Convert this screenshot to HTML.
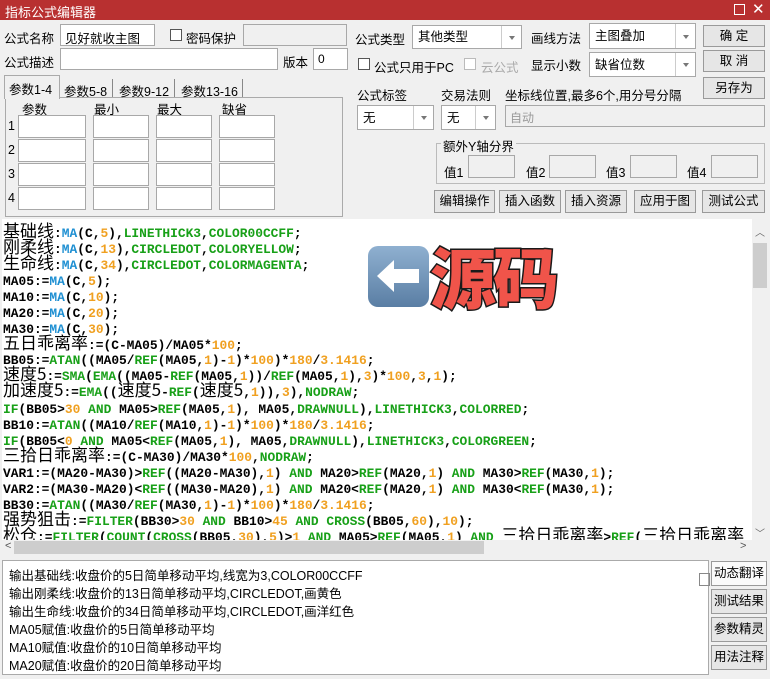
<!DOCTYPE html>
<html><head><meta charset="utf-8"><style>
*{margin:0;padding:0;box-sizing:border-box}
body{width:770px;height:679px;overflow:hidden;background:#f0f0f0;font-family:"Liberation Sans","Noto Sans CJK SC",sans-serif;font-size:12px;color:#000;position:relative}
.a{position:absolute}
.inp{position:absolute;background:#fff;border:1px solid #a8a8a8}
.btn{position:absolute;background:#e6e6e6;border:1px solid #9a9a9a;text-align:center;font-size:12.5px;line-height:20px}
.lbl{position:absolute;font-size:12.5px;white-space:nowrap}
.cb{position:absolute;width:12px;height:12px;border:1px solid #555;background:#fff}
.dd{position:absolute;background:#fff;border:1px solid #a8a8a8;font-size:12.5px;padding-left:5px}
.dd i{position:absolute;right:0;top:0;bottom:0;width:20px;border-left:1px solid #ccc;}
.dd i:after{content:"";position:absolute;left:7px;top:45%;border:3px solid transparent;border-top:4px solid #777}
#code{position:absolute;left:2px;top:219px;width:750px;height:321px;background:#fff;overflow:hidden}
#code div{position:absolute;left:1px;white-space:pre;font-family:"Liberation Mono",monospace;font-weight:bold;font-size:12.9px;line-height:16px;height:16px;letter-spacing:0}
.z{font-family:"Noto Sans CJK SC",sans-serif;font-weight:normal;font-size:17px;line-height:0;letter-spacing:0}
.f{color:#1e8fd2}.n{color:#f0a020}.k{color:#18a018}
#out div{position:absolute;left:6px;font-size:12.5px;white-space:nowrap}
</style></head><body>
<div class="a" style="left:0;top:0;width:770px;height:20px;background:#b83030"></div>
<div class="lbl" style="left:5px;top:2px;color:#fff;font-size:13px">指标公式编辑器</div>
<div class="a" style="left:734px;top:4px;width:11px;height:11px;border:1px solid #fff"></div>
<div class="lbl" style="left:752px;top:0px;color:#fff;font-size:15px">✕</div>

<div class="lbl" style="left:4px;top:28px">公式名称</div>
<div class="inp" style="left:60px;top:24px;width:95px;height:22px"><span style="position:absolute;left:4px;top:3px;font-size:12.5px">见好就收主图</span></div>
<div class="cb" style="left:170px;top:29px"></div>
<div class="lbl" style="left:186px;top:28px">密码保护</div>
<div class="inp" style="left:243px;top:24px;width:104px;height:22px;background:#f0f0f0"></div>
<div class="lbl" style="left:4px;top:52px">公式描述</div>
<div class="inp" style="left:60px;top:48px;width:218px;height:22px"></div>
<div class="lbl" style="left:283px;top:52px">版本</div>
<div class="inp" style="left:313px;top:48px;width:35px;height:22px"><span style="position:absolute;left:4px;top:3px">0</span></div>

<div class="a" style="left:5px;top:97px;width:338px;height:120px;border:1px solid #aaa;background:#f0f0f0"></div>
<div class="a" style="left:4px;top:75px;width:56px;height:24px;background:#f0f0f0;border:1px solid #aaa;border-bottom:none"></div>
<div class="lbl" style="left:9px;top:79px">参数1-4</div>
<div class="lbl" style="left:64px;top:81px">参数5-8</div>
<div class="a" style="left:112px;top:79px;width:1px;height:18px;background:#888"></div>
<div class="lbl" style="left:119px;top:81px">参数9-12</div>
<div class="a" style="left:174px;top:79px;width:1px;height:18px;background:#888"></div>
<div class="lbl" style="left:181px;top:81px">参数13-16</div>
<div class="a" style="left:242px;top:79px;width:1px;height:18px;background:#888"></div>
<div class="lbl" style="left:22px;top:99px">参数</div>
<div class="lbl" style="left:94px;top:99px">最小</div>
<div class="lbl" style="left:157px;top:99px">最大</div>
<div class="lbl" style="left:222px;top:99px">缺省</div>
<div class="lbl" style="left:8px;top:119px">1</div><div class="lbl" style="left:8px;top:143px">2</div><div class="lbl" style="left:8px;top:167px">3</div><div class="lbl" style="left:8px;top:191px">4</div>
<div class="inp" style="left:18px;top:115px;width:68px;height:23px"></div><div class="inp" style="left:93px;top:115px;width:56px;height:23px"></div><div class="inp" style="left:156px;top:115px;width:56px;height:23px"></div><div class="inp" style="left:219px;top:115px;width:56px;height:23px"></div>
<div class="inp" style="left:18px;top:139px;width:68px;height:23px"></div><div class="inp" style="left:93px;top:139px;width:56px;height:23px"></div><div class="inp" style="left:156px;top:139px;width:56px;height:23px"></div><div class="inp" style="left:219px;top:139px;width:56px;height:23px"></div>
<div class="inp" style="left:18px;top:163px;width:68px;height:23px"></div><div class="inp" style="left:93px;top:163px;width:56px;height:23px"></div><div class="inp" style="left:156px;top:163px;width:56px;height:23px"></div><div class="inp" style="left:219px;top:163px;width:56px;height:23px"></div>
<div class="inp" style="left:18px;top:187px;width:68px;height:23px"></div><div class="inp" style="left:93px;top:187px;width:56px;height:23px"></div><div class="inp" style="left:156px;top:187px;width:56px;height:23px"></div><div class="inp" style="left:219px;top:187px;width:56px;height:23px"></div>

<div class="lbl" style="left:355px;top:29px">公式类型</div>
<div class="dd" style="left:412px;top:25px;width:110px;height:24px;line-height:22px">其他类型<i></i></div>
<div class="lbl" style="left:531px;top:28px">画线方法</div>
<div class="dd" style="left:589px;top:23px;width:107px;height:26px;line-height:24px">主图叠加<i></i></div>
<div class="cb" style="left:358px;top:58px"></div>
<div class="lbl" style="left:374px;top:57px">公式只用于PC</div>
<div class="cb" style="left:464px;top:58px;border-color:#bbb"></div>
<div class="lbl" style="left:481px;top:57px;color:#aaa">云公式</div>
<div class="lbl" style="left:531px;top:55px">显示小数</div>
<div class="dd" style="left:589px;top:52px;width:107px;height:25px;line-height:24px">缺省位数<i></i></div>
<div class="btn" style="left:703px;top:25px;width:62px;height:22px">确 定</div>
<div class="btn" style="left:703px;top:50px;width:62px;height:22px">取 消</div>
<div class="btn" style="left:703px;top:77px;width:62px;height:22px">另存为</div>
<div class="lbl" style="left:357px;top:85px">公式标签</div>
<div class="dd" style="left:357px;top:105px;width:77px;height:25px;line-height:24px">无<i></i></div>
<div class="lbl" style="left:441px;top:85px">交易法则</div>
<div class="dd" style="left:441px;top:105px;width:55px;height:25px;line-height:24px">无<i></i></div>
<div class="lbl" style="left:505px;top:85px">坐标线位置,最多6个,用分号分隔</div>
<div class="inp" style="left:505px;top:105px;width:260px;height:22px;background:#f0f0f0"><span style="position:absolute;left:4px;top:3px;color:#999">自动</span></div>
<div class="a" style="left:436px;top:143px;width:329px;height:41px;border:1px solid #bbb"></div>
<div class="lbl" style="left:441px;top:136px;background:#f0f0f0;padding:0 2px">额外Y轴分界</div>
<div class="lbl" style="left:444px;top:162px">值1</div><div class="inp" style="left:468px;top:155px;width:47px;height:23px;background:#f0f0f0"></div>
<div class="lbl" style="left:526px;top:162px">值2</div><div class="inp" style="left:549px;top:155px;width:47px;height:23px;background:#f0f0f0"></div>
<div class="lbl" style="left:606px;top:162px">值3</div><div class="inp" style="left:630px;top:155px;width:47px;height:23px;background:#f0f0f0"></div>
<div class="lbl" style="left:687px;top:162px">值4</div><div class="inp" style="left:711px;top:155px;width:47px;height:23px;background:#f0f0f0"></div>
<div class="btn" style="left:434px;top:190px;width:61px;height:23px">编辑操作</div>
<div class="btn" style="left:499px;top:190px;width:62px;height:23px">插入函数</div>
<div class="btn" style="left:565px;top:190px;width:62px;height:23px">插入资源</div>
<div class="btn" style="left:634px;top:190px;width:62px;height:23px">应用于图</div>
<div class="btn" style="left:702px;top:190px;width:63px;height:23px">测试公式</div>

<div id="code">
<div style="top:7px"><span class="z">基础线</span>:<span class="f">MA</span>(C,<span class="n">5</span>),<span class="k">LINETHICK3</span>,<span class="k">COLOR00CCFF</span>;</div>
<div style="top:23px"><span class="z">刚柔线</span>:<span class="f">MA</span>(C,<span class="n">13</span>),<span class="k">CIRCLEDOT</span>,<span class="k">COLORYELLOW</span>;</div>
<div style="top:39px"><span class="z">生命线</span>:<span class="f">MA</span>(C,<span class="n">34</span>),<span class="k">CIRCLEDOT</span>,<span class="k">COLORMAGENTA</span>;</div>
<div style="top:55px">MA05:=<span class="f">MA</span>(C,<span class="n">5</span>);</div>
<div style="top:71px">MA10:=<span class="f">MA</span>(C,<span class="n">10</span>);</div>
<div style="top:87px">MA20:=<span class="f">MA</span>(C,<span class="n">20</span>);</div>
<div style="top:103px">MA30:=<span class="f">MA</span>(C,<span class="n">30</span>);</div>
<div style="top:119px"><span class="z">五日乖离率</span>:=(C-MA05)/MA05*<span class="n">100</span>;</div>
<div style="top:134px">BB05:=<span class="k">ATAN</span>((MA05/<span class="k">REF</span>(MA05,<span class="n">1</span>)-<span class="n">1</span>)*<span class="n">100</span>)*<span class="n">180</span>/<span class="n">3.1416</span>;</div>
<div style="top:150px"><span class="z">速度5</span>:=<span class="k">SMA</span>(<span class="k">EMA</span>((MA05-<span class="k">REF</span>(MA05,<span class="n">1</span>))/<span class="k">REF</span>(MA05,<span class="n">1</span>),<span class="n">3</span>)*<span class="n">100</span>,<span class="n">3</span>,<span class="n">1</span>);</div>
<div style="top:166px"><span class="z">加速度5</span>:=<span class="k">EMA</span>((<span class="z">速度5</span>-<span class="k">REF</span>(<span class="z">速度5</span>,<span class="n">1</span>)),<span class="n">3</span>),<span class="k">NODRAW</span>;</div>
<div style="top:183px"><span class="k">IF</span>(BB05&gt;<span class="n">30</span> <span class="k">AND</span> MA05&gt;<span class="k">REF</span>(MA05,<span class="n">1</span>), MA05,<span class="k">DRAWNULL</span>),<span class="k">LINETHICK3</span>,<span class="k">COLORRED</span>;</div>
<div style="top:199px">BB10:=<span class="k">ATAN</span>((MA10/<span class="k">REF</span>(MA10,<span class="n">1</span>)-<span class="n">1</span>)*<span class="n">100</span>)*<span class="n">180</span>/<span class="n">3.1416</span>;</div>
<div style="top:215px"><span class="k">IF</span>(BB05&lt;<span class="n">0</span> <span class="k">AND</span> MA05&lt;<span class="k">REF</span>(MA05,<span class="n">1</span>), MA05,<span class="k">DRAWNULL</span>),<span class="k">LINETHICK3</span>,<span class="k">COLORGREEN</span>;</div>
<div style="top:231px"><span class="z">三拾日乖离率</span>:=(C-MA30)/MA30*<span class="n">100</span>,<span class="k">NODRAW</span>;</div>
<div style="top:247px">VAR1:=(MA20-MA30)&gt;<span class="k">REF</span>((MA20-MA30),<span class="n">1</span>) <span class="k">AND</span> MA20&gt;<span class="k">REF</span>(MA20,<span class="n">1</span>) <span class="k">AND</span> MA30&gt;<span class="k">REF</span>(MA30,<span class="n">1</span>);</div>
<div style="top:263px">VAR2:=(MA30-MA20)&lt;<span class="k">REF</span>((MA30-MA20),<span class="n">1</span>) <span class="k">AND</span> MA20&lt;<span class="k">REF</span>(MA20,<span class="n">1</span>) <span class="k">AND</span> MA30&lt;<span class="k">REF</span>(MA30,<span class="n">1</span>);</div>
<div style="top:279px">BB30:=<span class="k">ATAN</span>((MA30/<span class="k">REF</span>(MA30,<span class="n">1</span>)-<span class="n">1</span>)*<span class="n">100</span>)*<span class="n">180</span>/<span class="n">3.1416</span>;</div>
<div style="top:295px"><span class="z">强势狙击</span>:=<span class="k">FILTER</span>(BB30&gt;<span class="n">30</span> <span class="k">AND</span> BB10&gt;<span class="n">45</span> <span class="k">AND</span> <span class="k">CROSS</span>(BB05,<span class="n">60</span>),<span class="n">10</span>);</div>
<div style="top:311px"><span class="z">松仓</span>:=<span class="k">FILTER</span>(<span class="k">COUNT</span>(<span class="k">CROSS</span>(BB05,<span class="n">30</span>),<span class="n">5</span>)&gt;<span class="n">1</span> <span class="k">AND</span> MA05&gt;<span class="k">REF</span>(MA05,<span class="n">1</span>) <span class="k">AND</span> <span class="z">三拾日乖离率</span>&gt;<span class="k">REF</span>(<span class="z">三拾日乖离率</span></div>
<svg class="a" style="left:365px;top:26px" width="63" height="63" viewBox="0 0 63 63"><defs><linearGradient id="g" x1="0" y1="0" x2="0" y2="1"><stop offset="0" stop-color="#8fb0d0"/><stop offset="1" stop-color="#5a7ea4"/></linearGradient></defs><rect x="1" y="1" width="61" height="61" rx="10" fill="url(#g)"/><path d="M10 31 L27 15 L27 24 L52 24 L52 38 L27 38 L27 47 Z" fill="#fff"/></svg>
<div class="a" style="left:428px;top:18px;font-family:'Noto Sans CJK SC',sans-serif;font-weight:900;font-size:66px;line-height:76px;color:#f0544a;-webkit-text-stroke:3px #1a1a1a;paint-order:stroke fill;letter-spacing:-3px">源码</div>
</div>
<div class="a" style="left:752px;top:219px;width:16px;height:321px;background:#f0f0f0"></div>
<div class="a" style="left:753px;top:243px;width:14px;height:45px;background:#cdcdcd"></div>
<div class="lbl" style="left:755px;top:224px;font-size:10px;color:#666">︿</div>
<div class="lbl" style="left:755px;top:525px;font-size:10px;color:#666">﹀</div>
<div class="a" style="left:2px;top:540px;width:750px;height:15px;background:#f0f0f0"></div>
<div class="a" style="left:14px;top:541px;width:470px;height:13px;background:#cdcdcd"></div>
<div class="lbl" style="left:5px;top:540px;font-size:11px;color:#555">&lt;</div>
<div class="lbl" style="left:740px;top:540px;font-size:11px;color:#555">&gt;</div>

<div id="out" class="a" style="left:2px;top:560px;width:707px;height:115px;background:#fff;border:1px solid #aaa">
<div style="top:4px">输出基础线:收盘价的5日简单移动平均,线宽为3,COLOR00CCFF</div>
<div style="top:22px">输出刚柔线:收盘价的13日简单移动平均,CIRCLEDOT,画黄色</div>
<div style="top:40px">输出生命线:收盘价的34日简单移动平均,CIRCLEDOT,画洋红色</div>
<div style="top:58px">MA05赋值:收盘价的5日简单移动平均</div>
<div style="top:76px">MA10赋值:收盘价的10日简单移动平均</div>
<div style="top:94px">MA20赋值:收盘价的20日简单移动平均</div>
<div class="a" style="left:696px;top:12px;width:11px;height:13px;border:1px solid #888"></div>
</div>
<div class="btn" style="left:711px;top:561px;width:56px;height:25px;line-height:23px;background:#fafafa">动态翻译</div>
<div class="btn" style="left:711px;top:589px;width:56px;height:25px;line-height:23px">测试结果</div>
<div class="btn" style="left:711px;top:617px;width:56px;height:25px;line-height:23px">参数精灵</div>
<div class="btn" style="left:711px;top:645px;width:56px;height:25px;line-height:23px">用法注释</div>
</body></html>
